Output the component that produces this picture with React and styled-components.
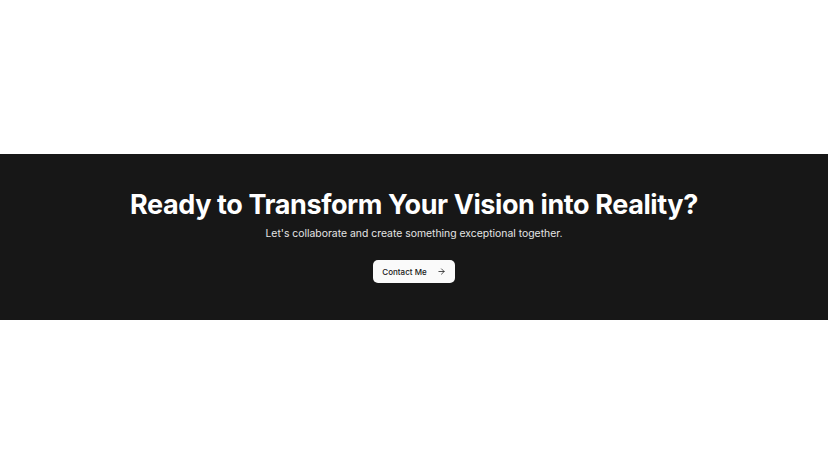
import React from 'react'
import styled, { createGlobalStyle } from 'styled-components'
import { ArrowRight } from 'lucide-react'

const GlobalStyle = createGlobalStyle`
  html, body {
    margin: 0;
    padding: 0;
    background: #ffffff;
    font-family: Inter, 'Noto Sans', sans-serif;
  }
`

const Page = styled.div`
  min-height: 100vh;
  display: flex;
  flex-direction: column;
  justify-content: center;
`

const Band = styled.section`
  box-sizing: border-box;
  background: #171717;
  height: 166px;
  padding-top: 35px;
  display: flex;
  flex-direction: column;
  align-items: center;
  text-align: center;
`

const Title = styled.h2`
  margin: 0;
  color: #ffffff;
  font-size: 27px;
  font-weight: 700;
  letter-spacing: -0.4px;
  line-height: 32px;
`

const Subtitle = styled.p`
  margin: 5px 0 0;
  color: #e5e5e5;
  font-size: 10.4px;
  line-height: 16px;
`

const Button = styled.a`
  margin-top: 18px;
  box-sizing: border-box;
  display: inline-flex;
  align-items: center;
  gap: 10px;
  height: 23px;
  padding: 0 9px;
  background: #fafafa;
  color: #171717;
  border-radius: 5px;
  font-size: 8px;
  font-weight: 500;
  text-decoration: none;
`

export default function App() {
  return (
    <>
      <GlobalStyle />
      <Page>
        <Band>
          <Title>Ready to Transform Your Vision into Reality?</Title>
          <Subtitle>Let's collaborate and create something exceptional together.</Subtitle>
          <Button href='#'>
            Contact Me
            <ArrowRight size={9} strokeWidth={2} />
          </Button>
        </Band>
      </Page>
    </>
  )
}
